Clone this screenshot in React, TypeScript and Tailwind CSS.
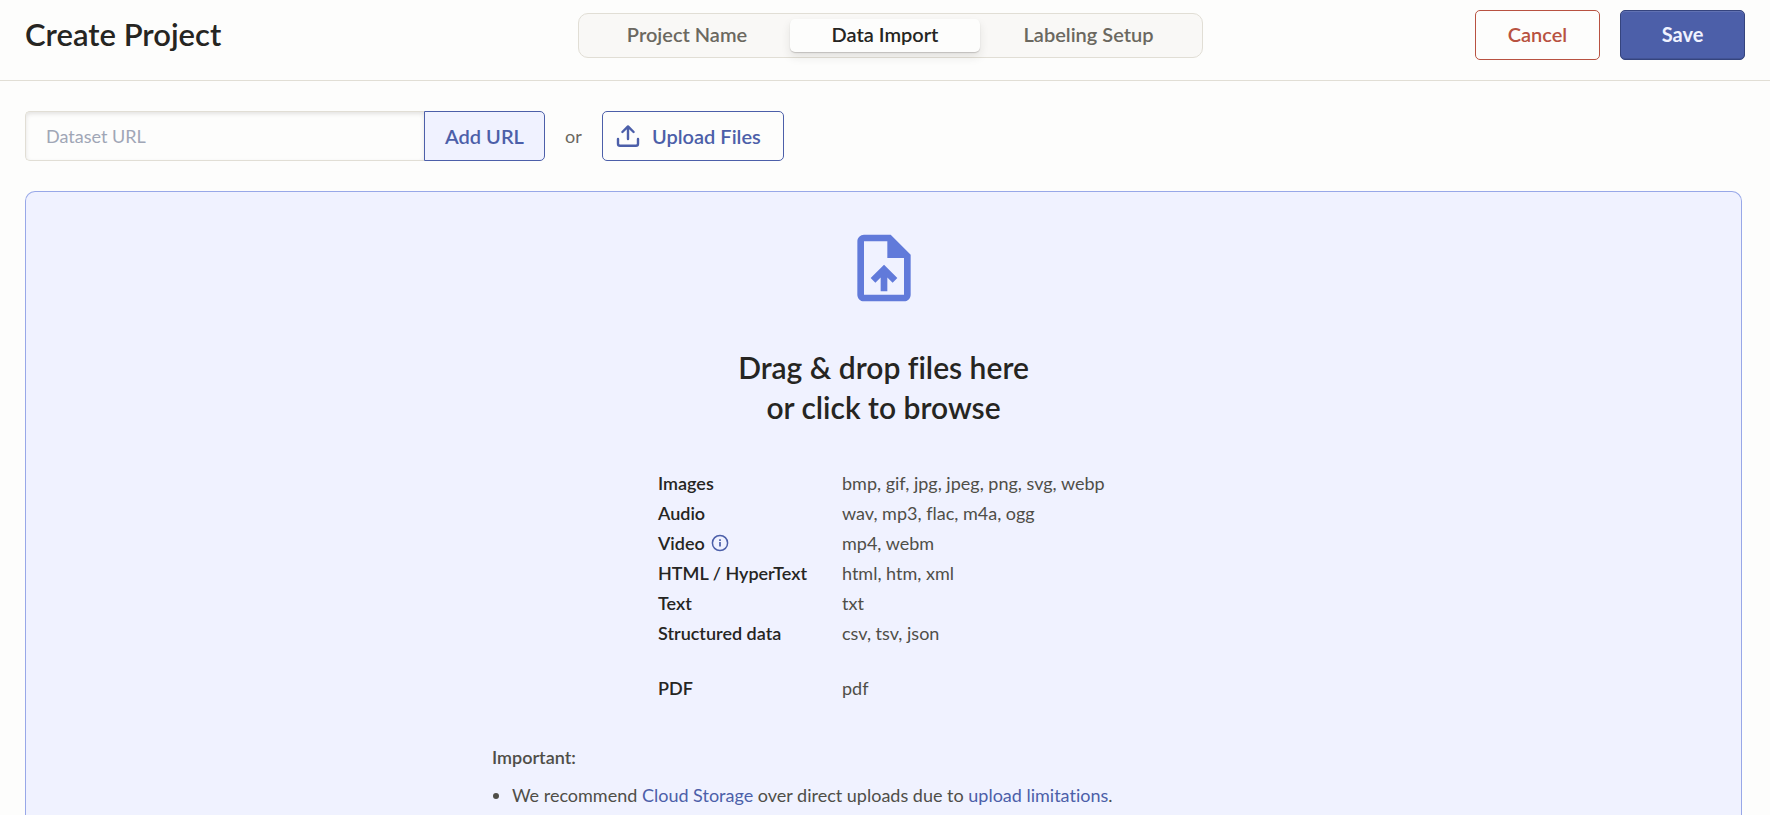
/**
 * プロジェクト作成画面の「Data Import」ステップ。
 * ヘッダー（タイトル・ステップ切替・操作ボタン）と、アップロード用のドロップ領域を表示する。
 */

import { useState } from 'react'

interface FileType {
  label: string
  extensions: string
  hasInfo?: boolean
  /** 前の行との間を空けて表示する */
  separated?: boolean
}

const STEPS = ['Project Name', 'Data Import', 'Labeling Setup']

const FILE_TYPES: FileType[] = [
  { label: 'Images', extensions: 'bmp, gif, jpg, jpeg, png, svg, webp' },
  { label: 'Audio', extensions: 'wav, mp3, flac, m4a, ogg' },
  { label: 'Video', extensions: 'mp4, webm', hasInfo: true },
  { label: 'HTML / HyperText', extensions: 'html, htm, xml' },
  { label: 'Text', extensions: 'txt' },
  { label: 'Structured data', extensions: 'csv, tsv, json' },
  { label: 'PDF', extensions: 'pdf', separated: true },
]

function UploadIcon() {
  return (
    <svg
      width="24"
      height="24"
      viewBox="0 0 24 24"
      fill="none"
      stroke="currentColor"
      strokeWidth="2.4"
      strokeLinecap="round"
      strokeLinejoin="round"
      aria-hidden="true"
    >
      <path d="M2 15v4.7a2 2 0 0 0 2 2h16a2 2 0 0 0 2-2V15" />
      <path d="M6.4 8l5.6-5.6L17.6 8M12 3v12" />
    </svg>
  )
}

function FileUploadIcon() {
  return (
    <svg width="80" height="80" viewBox="0 0 24 24" fill="currentColor" aria-hidden="true">
      <path d="M14 2H6c-1.1 0-1.99.9-1.99 2L4 20c0 1.1.89 2 1.99 2H18c1.1 0 2-.9 2-2V8l-6-6zm4 18H6V4h7v5h5v11zM8 15.01l1.41 1.41L11 14.84V19h2v-4.16l1.59 1.59L16 15.01 12.01 11z" />
    </svg>
  )
}

function InfoIcon() {
  return (
    <svg width="18" height="18" viewBox="0 0 18 18" fill="none" aria-hidden="true">
      <circle cx="9" cy="9" r="7.6" stroke="currentColor" strokeWidth="1.5" />
      <path d="M9 8v4.4" stroke="currentColor" strokeWidth="1.7" />
      <path d="M9 5.2v1.7" stroke="currentColor" strokeWidth="1.7" />
    </svg>
  )
}

function Header() {
  const [step, setStep] = useState('Data Import')

  return (
    <header className="grid h-[81px] grid-cols-[1fr_auto_1fr] items-start border-b border-[#e1ded5] px-[25px] pt-[10px]">
      <h1 className="text-[31px] leading-[48px] font-semibold">Create Project</h1>
      <nav className="mt-[3px] ml-[11px] grid h-[45px] grid-cols-[206px_190px_217px] rounded-[10px] border border-[#e1ded5] bg-[#f9f8f6] p-[5px]">
        {STEPS.map((name) => (
          <button
            key={name}
            type="button"
            onClick={() => setStep(name)}
            className={
              name === step
                ? 'rounded-[5px] bg-[#fdfdfc] pb-1 text-[20px] leading-[28px] font-semibold text-[#262522] shadow-[0_1px_1px_rgba(38,37,34,0.2),0_5px_10px_rgba(38,37,34,0.1)]'
                : 'rounded-[5px] pb-1 text-[20px] leading-[28px] font-semibold text-[#6b6860]'
            }
          >
            {name}
          </button>
        ))}
      </nav>
      <div className="flex justify-end gap-5">
        <button
          type="button"
          className="h-[50px] w-[125px] rounded-[5px] border border-[#b85241] pb-[2px] text-[20px] font-semibold text-[#b85241]"
        >
          Cancel
        </button>
        <button
          type="button"
          className="h-[50px] w-[125px] rounded-[5px] border border-[#35447e] bg-[#4c5fa9] pb-[2px] text-[20px] font-bold text-[#f0f2ff] shadow-[inset_0_1px_0_rgba(255,255,255,0.12),inset_0_-1px_0_rgba(0,0,0,0.12)]"
        >
          Save
        </button>
      </div>
    </header>
  )
}

function UrlBar() {
  return (
    <div className="flex items-center">
      <form className="flex" onSubmit={(e) => e.preventDefault()}>
        <input
          type="text"
          aria-label="Dataset URL"
          placeholder="Dataset URL"
          className="h-[50px] w-[399px] rounded-l-[5px] border border-r-0 border-[#e1ded5] px-5 text-[18px] shadow-[inset_0_2px_4px_rgba(38,37,34,0.12)] outline-none placeholder:text-[#a0a6b6]"
        />
        <button
          type="submit"
          className="h-[50px] w-[121px] rounded-r-[5px] border border-[#4c5fa9] bg-[#f0f2ff] text-[20px] font-semibold text-[#4c5fa9]"
        >
          Add URL
        </button>
      </form>
      <span className="w-[57px] text-center text-[18px] text-[#6b6860]">or</span>
      <button
        type="button"
        className="flex h-[50px] w-[182px] items-center gap-3 rounded-[5px] border border-[#4c5fa9] pl-[13px] text-[20px] font-semibold text-[#4c5fa9]"
      >
        <UploadIcon />
        Upload Files
      </button>
    </div>
  )
}

function DropZone() {
  return (
    <section className="mt-[30px] flex flex-1 flex-col items-center rounded-t-[10px] border border-b-0 border-[#98a8e8] bg-[#f0f2ff] pt-9">
      <span className="text-[#617ada]">
        <FileUploadIcon />
      </span>
      <h2 className="mt-[39px] text-center text-[30px] leading-[40px] font-semibold">
        Drag &amp; drop files here
        <br />
        or click to browse
      </h2>

      <table className="mt-[41px] w-[451px] table-fixed text-left text-[18px] leading-[30px]">
        <tbody>
          {FILE_TYPES.map((type) => (
            <tr key={type.label} className="align-bottom">
              <th
                scope="row"
                className={type.separated ? 'w-[184px] pt-[25px] font-semibold' : 'w-[184px] font-semibold'}
              >
                <span className="flex items-center gap-[6px]">
                  {type.label}
                  {type.hasInfo && (
                    <span className="text-[#4c5fa9]">
                      <InfoIcon />
                    </span>
                  )}
                </span>
              </th>
              <td className="whitespace-nowrap text-[#4f4e48]">{type.extensions}</td>
            </tr>
          ))}
        </tbody>
      </table>

      <div className="mt-10 w-[783px] max-w-full text-[18px] leading-[28px] text-[#4f4e48]">
        <p className="font-semibold">Important:</p>
        <ul className="mt-[10px] list-disc pl-5">
          <li>
            We recommend{' '}
            <a href="#cloud-storage" className="text-[#4c5fa9]">
              Cloud Storage
            </a>{' '}
            over direct uploads due to{' '}
            <a href="#upload-limitations" className="text-[#4c5fa9]">
              upload limitations
            </a>
            .
          </li>
        </ul>
      </div>
    </section>
  )
}

export default function App() {
  return (
    <div className="flex min-h-screen flex-col bg-[#fdfdfc] font-['Lato','Open_Sans',sans-serif] text-[#262522] [font-variant-ligatures:none]">
      <Header />
      <main className="flex flex-1 flex-col pt-[30px] pr-7 pl-[25px]">
        <UrlBar />
        <DropZone />
      </main>
    </div>
  )
}
